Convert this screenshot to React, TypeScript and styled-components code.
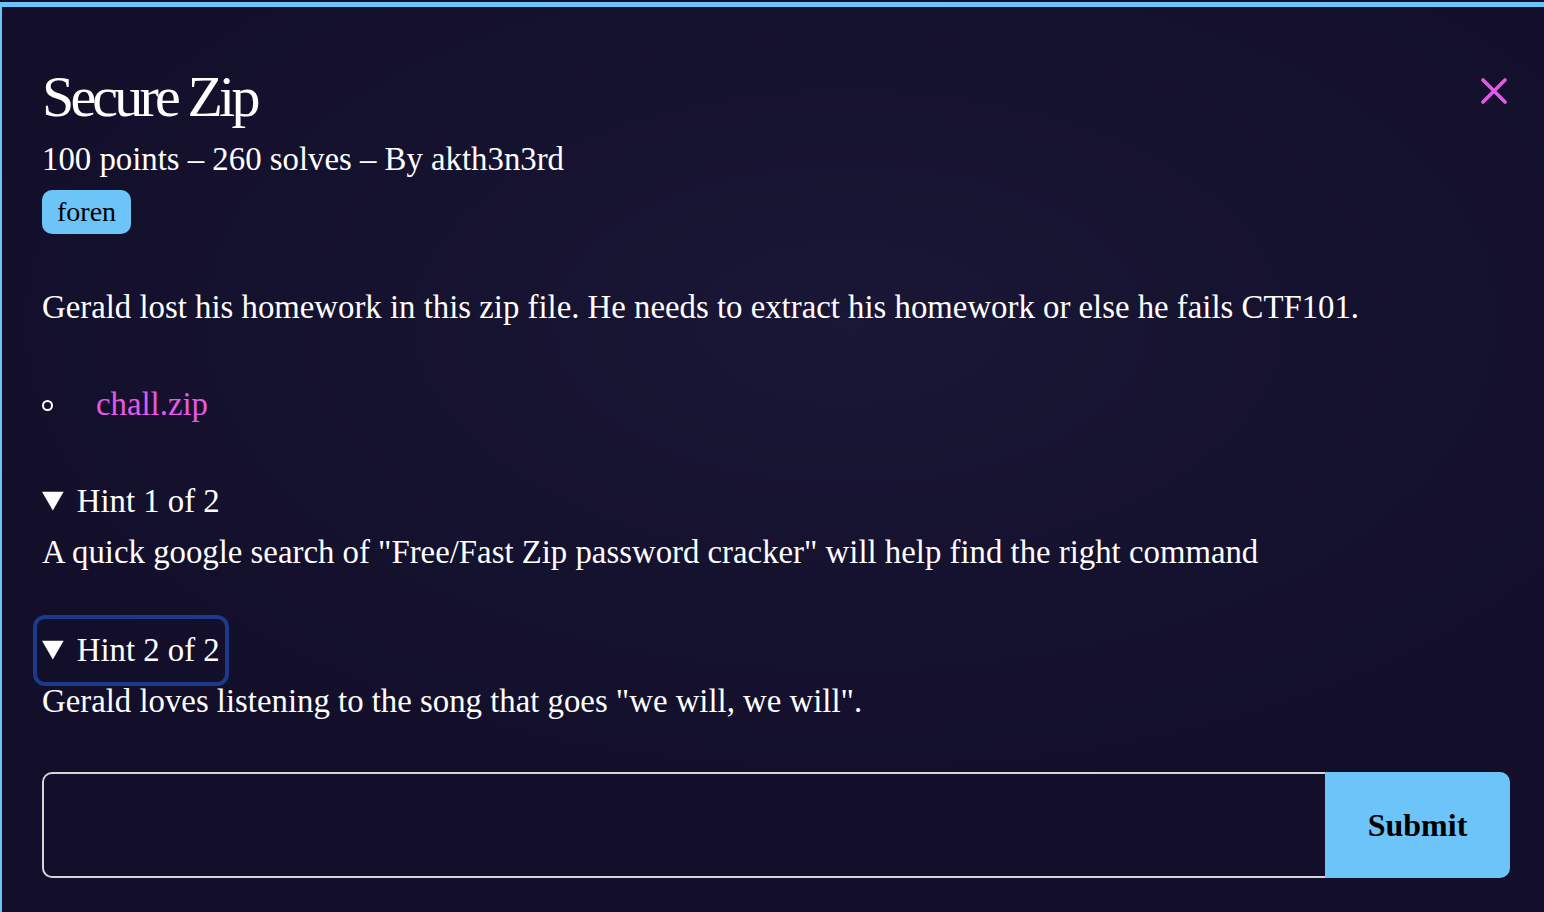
import React from "react";
import styled, { createGlobalStyle } from "styled-components";

const Global = createGlobalStyle`
  html, body { margin: 0; padding: 0; background: #13102d; }
  body { width: 1544px; height: 912px; overflow: hidden; }
  * { box-sizing: border-box; }
`;

const Panel = styled.div`
  margin-top: 2px;
  height: 910px;
  border-top: 5px solid #6cc4f9;
  border-left: 2px solid #6cc4f9;
  background: radial-gradient(ellipse 60% 55% at 55% 35%, #1a1636 0%, #15122f 55%, #130f2b 100%);
  color: #ffffff;
  font-family: "Liberation Serif", "Times New Roman", serif;
  font-size: 32.8px;
  padding: 56px 37px 0 40px;
  display: flex;
  flex-direction: column;
`;

const Header = styled.div`
  display: flex;
  justify-content: space-between;
  align-items: flex-start;
`;

const Title = styled.h1`
  margin: 0;
  font-size: 58px;
  font-weight: 400;
  letter-spacing: -0.066em;
  line-height: 68px;
`;

const CloseButton = styled.button`
  background: none;
  border: none;
  padding: 0;
  margin-top: 15px;
  width: 26px;
  height: 26px;
  display: flex;
  align-items: center;
  justify-content: center;
  cursor: pointer;
`;

const Meta = styled.div`
  line-height: 36px;
  margin-top: 10px;
`;

const Tag = styled.span`
  align-self: flex-start;
  margin-top: 13px;
  background: #6cc4f9;
  color: #000;
  font-size: 28px;
  line-height: 44px;
  height: 44px;
  padding: 0 15px;
  border-radius: 10px;
`;

const Description = styled.p`
  margin: 49px 0 0;
  line-height: 48px;
`;

const Files = styled.ul`
  list-style: none;
  margin: 49px 0 0;
  padding: 0;
`;

const FileItem = styled.li`
  display: flex;
  align-items: center;
  line-height: 48px;
  gap: 43px;
`;

const Bullet = styled.span`
  width: 11px;
  height: 11px;
  border: 2px solid #ffffff;
  border-radius: 50%;
  margin-top: 2px;
`;

const FileLink = styled.a`
  color: #e35ae8;
  text-decoration: none;
`;

const Hint = styled.details`
  margin-top: 49px;
  line-height: 49px;
`;

const HintSummary = styled.summary<{ $focused?: boolean }>`
  width: fit-content;
  cursor: pointer;
  line-height: 49px;
  padding: 2px 0;
  margin: -2px 0;
  border-radius: 3px;
  outline: ${(p) => (p.$focused ? "4px solid #1c3a8c" : "none")};
  outline-offset: 5px;
`;

const HintBody = styled.div`
  margin-top: 2px;
  line-height: 49px;
`;

const Form = styled.form`
  display: flex;
  margin-top: 46px;
  height: 106px;
  width: 1468px;
`;

const FlagInput = styled.input`
  flex: 1;
  background: transparent;
  border: 2px solid #d6d6d6;
  border-right: none;
  border-radius: 10px 0 0 10px;
  color: #fff;
  font-family: inherit;
  font-size: 32px;
  padding: 0 20px;
  outline: none;
`;

const SubmitButton = styled.button`
  width: 185px;
  background: #6cc4f9;
  border: none;
  border-radius: 0 10px 10px 0;
  color: #000;
  font-family: "Liberation Serif", "Times New Roman", serif;
  font-size: 32px;
  font-weight: 700;
  cursor: pointer;
`;

export default function App() {
  return (
    <>
      <Global />
      <Panel>
        <Header>
          <Title>Secure Zip</Title>
          <CloseButton aria-label="Close">
            <svg width="26" height="26" viewBox="0 0 26 26">
              <path d="M2 2 L24 24 M24 2 L2 24" stroke="#e35ae8" strokeWidth="3.6" strokeLinecap="round" />
            </svg>
          </CloseButton>
        </Header>
        <Meta>100 points – 260 solves – By akth3n3rd</Meta>
        <Tag>foren</Tag>
        <Description>
          Gerald lost his homework in this zip file. He needs to extract his homework or else he fails CTF101.
        </Description>
        <Files>
          <FileItem>
            <Bullet />
            <FileLink href="#">chall.zip</FileLink>
          </FileItem>
        </Files>
        <Hint open>
          <HintSummary>Hint 1 of 2</HintSummary>
          <HintBody>A quick google search of "Free/Fast Zip password cracker" will help find the right command</HintBody>
        </Hint>
        <Hint open>
          <HintSummary $focused>Hint 2 of 2</HintSummary>
          <HintBody>Gerald loves listening to the song that goes "we will, we will".</HintBody>
        </Hint>
        <Form onSubmit={(e) => e.preventDefault()}>
          <FlagInput type="text" />
          <SubmitButton type="submit">Submit</SubmitButton>
        </Form>
      </Panel>
    </>
  );
}
